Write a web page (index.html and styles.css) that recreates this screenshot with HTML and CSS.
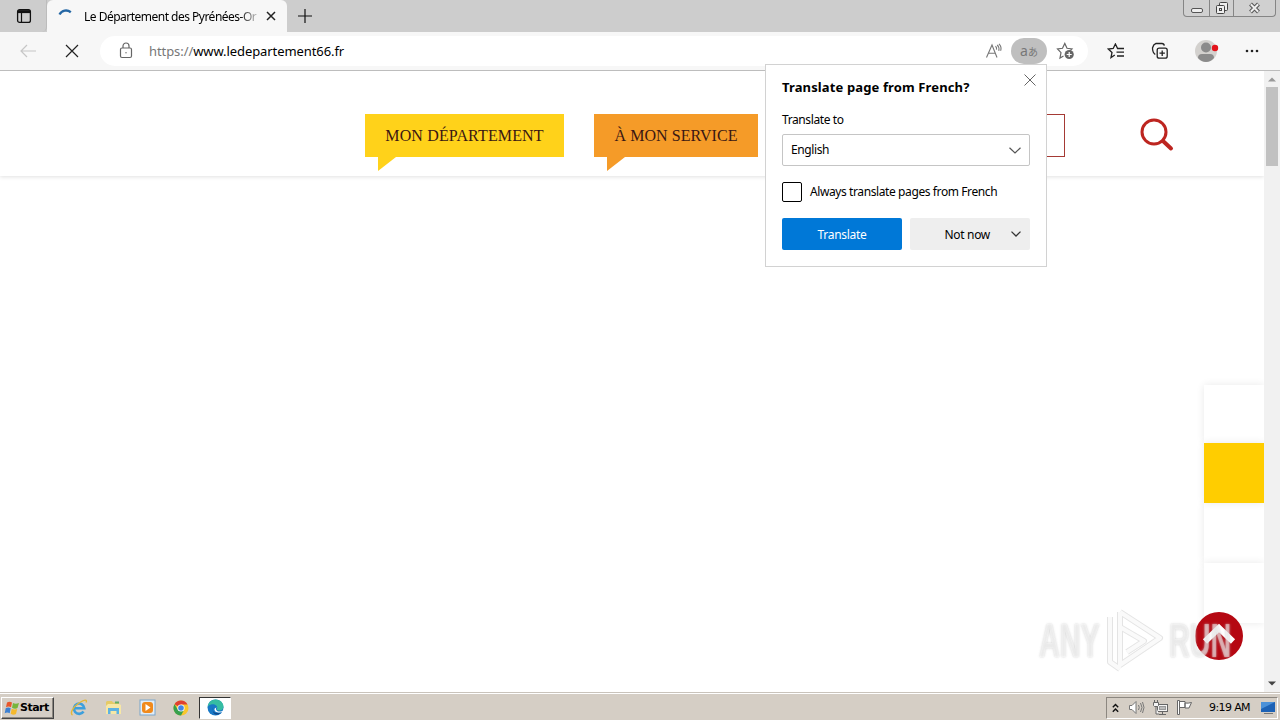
FILE: index.html
```html
<!DOCTYPE html>
<html lang="en">
<head>
  <meta charset="UTF-8" />
  <meta name="viewport" content="width=device-width, initial-scale=1.0" />
  <title>Le Département des Pyrénées-Orientales</title>
  <link rel="stylesheet" href="styles.css">
</head>
<body>
  <!-- Tab strip -->
  <div class="titlebar">
    <div class="tab-actions">
      <svg width="16" height="16" viewBox="0 0 16 16" fill="none" stroke="#111"><rect x="1.6" y="1.6" width="12.8" height="12.8" rx="2" stroke-width="1.3"/><path d="M2 3.6h12" stroke-width="3"/><path d="M5.5 4v10" stroke-width="1.2"/></svg>
    </div>
    <div class="tab">
      <svg class="spinner" width="16" height="16" viewBox="0 0 16 16" fill="none" stroke="#2467a5" stroke-width="2.4"><path d="M1.500 5.500C4 1.200 9 .3 12.800 3.200"/></svg>
      <span class="tab-title">Le Département des Pyrénées-Or</span>
      <svg class="tab-close" width="10" height="10" viewBox="0 0 10 10" stroke="#222" stroke-width="1.5"><path d="M1 1l8 8M9 1l-8 8"/></svg>
    </div>
    <svg class="new-tab" width="16" height="16" viewBox="0 0 16 16" stroke="#111" stroke-width="1.2"><path d="M8 1v14M1 8h14"/></svg>
    <div class="window-buttons">
      <span class="win-min"><svg width="14" height="7" viewBox="0 0 14 7"><rect x="1.5" y="1.5" width="11" height="4" rx="1.5" fill="#eee" stroke="#555"/></svg></span>
      <span class="win-max"><svg width="14" height="14" viewBox="0 0 14 14" fill="#eee" stroke="#444"><rect x="4.5" y="1.5" width="8" height="8" rx="1"/><rect x="1.5" y="4.5" width="8" height="8" rx="1"/><rect x="4.5" y="7.5" width="2" height="2"/></svg></span>
      <span class="win-close"><svg width="13" height="12" viewBox="0 0 13 12"><path d="M2.5 2l8 8M10.5 2l-8 8" stroke="#555" stroke-width="4"/><path d="M2.8 2.3l7.4 7.4M10.2 2.3l-7.4 7.4" stroke="#eee" stroke-width="2"/></svg></span>
    </div>
  </div>

  <!-- Address bar -->
  <div class="toolbar">
    <svg class="back" width="18" height="14" viewBox="0 0 18 14" fill="none" stroke="#c6c6c6" stroke-width="1.2"><path d="M8 1L2 7l6 6M2 7h15"/></svg>
    <svg class="stop" width="14" height="14" viewBox="0 0 14 14" stroke="#222" stroke-width="1.2"><path d="M1 1l12 12M13 1L1 13"/></svg>
    <div class="address">
      <svg class="lock" width="14" height="17" viewBox="0 0 14 17" fill="none" stroke="#666" stroke-width="1.2"><rect x="1.5" y="6" width="11" height="9.5" rx="1.5"/><path d="M4 6V4a3 3 0 0 1 6 0v2"/><circle cx="7" cy="10.7" r=".7" fill="#666" stroke="none"/></svg>
      <span class="url"><span class="scheme">https://</span>www.ledepartement66.fr</span>
      <svg class="read" width="18" height="16" viewBox="0 0 18 16" fill="none" stroke="#777" stroke-width="1.1"><path d="M1.5 14.5L7 2l5 12.5M3.5 10.2h7M10.5 3.2q1.5 1.5 1 3.5M12.2 1.8q2.4 2.3 1.6 6M14 .8q3 3.2 1.6 7"/></svg>
      <span class="translate-icon"><b>a</b>あ</span>
      <svg class="fav" width="19" height="18" viewBox="0 0 19 18" fill="none" stroke="#666" stroke-width="1.2"><path d="M7.5 14L4 16l1-5.300L1.500 7l5-.7L8.800 1.500 11 6.300l5 .6-1.700 1.800"/><circle cx="13.200" cy="12.500" r="4.600" fill="#666" stroke="none"/><path d="M13.200 10v5M10.700 12.500h5" stroke="#fff"/></svg>
    </div>
    <svg class="favorites" width="18" height="16" viewBox="0 0 18 16" fill="none" stroke="#222" stroke-width="1.3"><path d="M7.800 12L4 14.500l1-5L1.300 6.100l4.900-.6L8.400 1l2.200 4.500H17M9.500 9.200H17M10 13h7"/></svg>
    <svg class="collections" width="18" height="18" viewBox="0 0 18 18" fill="none" stroke="#222" stroke-width="1.3"><rect x="6.200" y="6.200" width="10" height="10" rx="2"/><path d="M11.200 8.500v5.400M8.500 11.200h5.400M4.300 12.500C2 11 1.500 8 1.500 6l1.300-3L5 1.500h6q2 0 2.300 2.200"/></svg>
    <svg class="profile" width="24" height="24" viewBox="0 0 24 24"><circle cx="11" cy="12" r="11" fill="#d3d1ce"/><circle cx="11" cy="8.500" r="5" fill="#8b8b8b"/><path d="M3 19q0-4 4-4h8q4 0 4 4-3.500 4-8 4t-8-4z" fill="#8b8b8b"/><circle cx="20" cy="9" r="3.200" fill="#e3131b"/></svg>
    <svg class="more" width="14" height="4" viewBox="0 0 14 4" fill="#222"><circle cx="2" cy="2" r="1.300"/><circle cx="7" cy="2" r="1.300"/><circle cx="12" cy="2" r="1.300"/></svg>
  </div>

  <!-- Page -->
  <div class="viewport">
    <main class="page">
      <header class="site-header">
        <nav class="site-nav">
          <a class="bubble yellow" href="#">MON DÉPARTEMENT</a>
          <a class="bubble orange" href="#">À MON SERVICE</a>
          <a class="outlined" href="#"></a>
        </nav>
        <svg class="search" width="36" height="36" viewBox="0 0 36 36" fill="none" stroke="#bd2520"><circle cx="15" cy="15" r="12" stroke-width="3"/><path d="M24 24l8 7.500" stroke-width="4" stroke-linecap="round"/></svg>
      </header>
      <div class="side-links">
        <span></span><span class="current"></span><span></span><span></span>
      </div>
      <svg class="to-top" width="48" height="48" viewBox="0 0 48 48"><circle cx="24" cy="24" r="24" fill="#b50812"/><path d="M10 29.500L24 16l14 13.500" fill="none" stroke="#fff" stroke-width="6"/></svg>
      <div class="watermark">
        <span>ANY</span>
        <svg width="60" height="64" viewBox="0 0 60 64" fill="none" stroke-linejoin="round"><g stroke="#dedede" stroke-width="6"><path d="M5 8v45l10 7M15 3v43M15 3l40 26-40 27V18l24 14-17 11"/></g><g stroke="#fafafa" stroke-width="4"><path d="M5 8v45l10 7M15 3v43M15 3l40 26-40 27V18l24 14-17 11"/></g></svg>
        <span>RUN</span>
      </div>
    </main>
    <div class="scrollbar">
      <svg width="8" height="5" viewBox="0 0 8 5"><path d="M0 4.500L4 .5l4 4z" fill="#999"/></svg>
      <div class="thumb"></div>
      <svg class="down" width="8" height="5" viewBox="0 0 8 5"><path d="M0 .5h8l-4 4z" fill="#444"/></svg>
    </div>
  </div>

  <!-- Translate popup -->
  <div class="popup">
    <svg class="popup-close" width="12" height="12" viewBox="0 0 12 12" stroke="#666"><path d="M.5.5l11 11M11.5.5l-11 11"/></svg>
    <h2>Translate page from French?</h2>
    <p class="label">Translate to</p>
    <div class="select"><span>English</span><svg width="12" height="7" viewBox="0 0 12 7" fill="none" stroke="#555" stroke-width="1.2"><path d="M.5.7L6 6 11.500.7"/></svg></div>
    <div class="check"><i></i><span>Always translate pages from French</span></div>
    <div class="buttons">
      <button class="primary">Translate</button>
      <button class="secondary"><span>Not now</span><svg width="10" height="6" viewBox="0 0 10 6" fill="none" stroke="#333" stroke-width="1.3"><path d="M.5.6L5 5 9.500.6"/></svg></button>
    </div>
  </div>

  <!-- Taskbar -->
  <footer class="taskbar">
    <div class="start">
      <svg width="16" height="16" viewBox="0 0 16 16"><path d="M3 2.500q2.500-1.500 5 0L7 7.300q-2.500-1.500-5 0z" fill="#e8572b"/><path d="M9 3q2.500 1.400 6 0l-1.500 5q-2.500 1.400-5.500-.3z" fill="#77b53b"/><path d="M1.700 8.300q2.500-1.500 5 0l-1 5q-2.500-1.500-5 0z" fill="#3c80d2"/><path d="M7.700 8.800q2.500 1.400 5.500.3l-1.200 5q-2.500 1.400-5.300-.3z" fill="#f5b92c"/></svg>
      <span>Start</span>
    </div>
    <div class="apps">
      <span><svg width="18" height="18" viewBox="0 0 18 18" fill="none"><path d="M13.500 12.500A5.200 5.200 0 1 1 14.300 9.300H5" stroke="#3d9fdc" stroke-width="2.600"/><path d="M2.500 16C-.5 14.500 3 8 9 4s8.500-3.500 7-.5" stroke="#e4b736" stroke-width="1.400"/></svg></span>
      <span><svg width="17" height="17" viewBox="0 0 17 17"><path d="M1 3l1-1h5l1 1.500h6V14H1z" fill="#e5ca66"/><path d="M3 5h11l2 1v9H1V7z" fill="#f7e7a5"/><path d="M3 9h11v6h-2.500v-3h-6v3H3z" fill="#5eb2e2"/><path d="M10 2.500h4v2h-4z" fill="#62ae66"/></svg></span>
      <span><svg width="17" height="17" viewBox="0 0 17 17"><rect x="1" y="1" width="15" height="15" fill="#e1edf7" stroke="#7aa5cc"/><rect x="3" y="3" width="11" height="11" rx="3" fill="#f08a1d"/><path d="M6.500 5l5 3.500-5 3.500z" fill="#fff"/></svg></span>
      <span><svg width="16" height="16" viewBox="0 0 16 16"><circle cx="8" cy="8" r="7.500" fill="#f9c62c"/><path d="M8 8L1.500 4.200A7.500 7.500 0 0 1 14.500 4.500H8z" fill="#df4033"/><path d="M1.500 4.200A7.500 7.500 0 0 0 8 15.500L11 10 5 10z" fill="#36a04e"/><circle cx="8" cy="8" r="3.600" fill="#fff"/><circle cx="8" cy="8" r="2.800" fill="#4285e5"/></svg></span>
      <span class="active"><svg width="17" height="17" viewBox="0 0 17 17"><circle cx="8.500" cy="8.500" r="8" fill="#1878c6"/><path d="M.6 8C1 3.500 4.500.5 8.500.5c5 0 8 3.800 8 7 0 2.500-2 4-4 4-2.500 0-3.300-1-2.300-2C10.800 7 8 5 5 5.300 2.500 5.600 1 7 .6 8z" fill="#36bda2"/><path d="M5.500 8.500c-1 4 3 6.800 8.500 5-5 5-9 .5-8.500-5z" fill="#114a8b"/><path d="M9.500 8.200c-1.400 2 .2 4.600 3.500 4.300 1.500-.1 3-.9 3.500-1.600l-.5 1.900c-3 1.500-9 1.200-8.500-3z" fill="#fff"/></svg></span>
    </div>
    <div class="tray">
      <svg width="7" height="10" viewBox="0 0 7 10" fill="none" stroke="#111" stroke-width="1.4"><path d="M.8 4.200l2.700-2.700 2.700 2.700M.8 8.700L3.500 6l2.700 2.700"/></svg>
      <svg class="sound" width="17" height="15" viewBox="0 0 17 15" fill="none" stroke="#777"><path d="M1.500 5.500H4l4-4v12l-4-4H1.500z" fill="#fff"/><path d="M10.500 5q1.500 2.500 0 5M12.500 3q3 4.500 0 9M14.500 2q3 5.500 0 11"/></svg>
      <svg class="network" width="17" height="16" viewBox="0 0 17 16" fill="#f4f4f4" stroke="#666"><rect x="5.500" y="4.500" width="10" height="7"/><rect x="7.500" y="6.500" width="6" height="3" fill="#bbb" stroke="#999"/><path d="M7 14.500h7M10.500 12v2M1.500 2.500h5v3l-1 1h-3l-1-1zM2.500 0v2M5.500 0v2M4 7v7h3"/></svg>
      <svg class="flag" width="17" height="15" viewBox="0 0 17 15" fill="#fff" stroke="#666"><path d="M1.500.5h2v14h-2zM3.500 1.500h5.500v6H3.500zM9 3q3 .5 6.500-.5l-2.500 5.500H9z"/></svg>
      <span class="clock">9:19 AM</span>
      <svg class="desktop" width="16" height="14" viewBox="0 0 16 14"><path d="M1 1h14v10H1z" fill="#1d62b5"/><path d="M1 1h14L1 8z" fill="#4b91d8"/><path d="M4 12h9v1H4z" fill="#777"/></svg>
    </div>
  </footer>
</body>
</html>
```

FILE: styles.css
```css
*, *::before, *::after {
  box-sizing: border-box;
  margin: 0;
  padding: 0;
}
body {
  width: 1280px;
  height: 720px;
  overflow: hidden;
  display: flex;
  flex-direction: column;
  position: relative;
  background: #fff;
  color: #000;
  font-family: "Noto Sans", "Open Sans", "Noto Sans CJK JP", sans-serif;
  font-size: 12px;
}
svg { display: block; flex: none; }
a { text-decoration: none; color: inherit; }

/* Tab strip */
.titlebar {
  height: 32px;
  flex: none;
  display: flex;
  background: #cdcdcd;
}
.tab-actions {
  width: 47px;
  padding: 8px 0 0 16px;
  border-radius: 0 0 5px 0;
  border-right: 1px solid #bcbcbc;
}
.tab {
  width: 240px;
  display: flex;
  align-items: center;
  padding-left: 11px;
  background: #f7f7f7;
  border-radius: 6px 6px 0 0;
}
.spinner { margin-top: 2px; }
.tab-title {
  width: 173px;
  margin-left: 10px;
  white-space: nowrap;
  letter-spacing: -0.51px;
  -webkit-mask-image: linear-gradient(90deg, #000 155px, transparent 178px);
  mask-image: linear-gradient(90deg, #000 155px, transparent 178px);
}
.tab-close { margin-left: 9px; }
.new-tab { margin: 8px 0 0 10px; }
.window-buttons {
  display: flex;
  margin-left: auto;
  margin-right: 4px;
  width: 93px;
  height: 17px;
  border: 1px solid #858585;
  border-top: 0;
  border-radius: 0 0 4px 4px;
  background: #d0d0d0;
}
.window-buttons span {
  display: flex;
  justify-content: center;
  align-items: center;
}
.win-min { width: 25px; padding-top: 4px; }
.win-max { width: 25px; border: solid #858585; border-width: 0 1px; }
.win-close { flex: 1; }

/* Address bar */
.toolbar {
  height: 39px;
  flex: none;
  display: flex;
  align-items: center;
  padding: 0 21px 1px 19px;
  background: #f7f7f7;
  border-bottom: 1px solid #bdbdbd;
}
.stop { margin-left: 28px; }
.address {
  width: 988px;
  height: 30px;
  margin-left: 21px;
  padding: 0 13px 0 19px;
  display: flex;
  align-items: center;
  background: #fff;
  border-radius: 15px;
}
.url {
  margin-left: 16px;
  margin-right: auto;
  font-size: 13px;
  letter-spacing: -0.08px;
}
.scheme { color: #777; }
.translate-icon {
  width: 36px;
  height: 26px;
  margin: 0 9px 0 8px;
  border-radius: 13px;
  background: #bfbfbf;
  color: #777;
  font-size: 10px;
  line-height: 25px;
  text-align: center;
}
.translate-icon b { font-size: 14px; font-weight: 400; }
.favorites { margin-left: 19px; }
.collections { margin-left: 26px; }
.profile { margin-left: 26px; }
.more { margin-left: auto; }

/* Page */
.viewport {
  height: 621px;
  flex: none;
  display: flex;
}
.page {
  position: relative;
  width: 1264px;
  overflow: hidden;
}
.site-header {
  height: 105px;
  display: flex;
  align-items: flex-start;
  padding: 43px 0 0 365px;
  box-shadow: 0 1px 4px rgba(0,0,0,0.12);
}
.site-nav {
  width: 700px;
  display: flex;
}
.bubble {
  position: relative;
  height: 43px;
  font-family: "Liberation Serif", serif;
  font-size: 16px;
  line-height: 43px;
  text-align: center;
  white-space: nowrap;
  color: #3a1713;
}
.bubble::after {
  content: "";
  position: absolute;
  top: 100%;
  left: 13px;
  width: 18px;
  height: 14px;
  background: inherit;
  clip-path: polygon(0 0, 100% 0, 0 100%);
}
.yellow { width: 199px; background: #ffd21a; letter-spacing: 0.15px; }
.orange { width: 164px; margin-left: 30px; background: #f59b28; letter-spacing: 0.05px; }
.outlined {
  width: 277px;
  height: 43px;
  margin-left: auto;
  border: 1px solid #a53a35;
}
.search { margin: 3px 0 0 74px; }

/* Floating links on the right edge */
.side-links {
  position: absolute;
  top: 314px;
  right: 0;
  width: 60px;
}
.side-links span {
  display: block;
  height: 60px;
  background: #fff;
  box-shadow: 0 0 8px rgba(0,0,0,0.09);
}
.side-links span:first-child { height: 58px; }
.side-links .current { position: relative; background: #ffcd00; }
.to-top {
  position: absolute;
  left: 1195px;
  top: 541px;
}
.watermark {
  position: absolute;
  left: 1039px;
  top: 538px;
  display: flex;
  align-items: center;
  opacity: 0.8;
  font-family: "Liberation Sans", sans-serif;
  font-size: 48px;
  font-weight: 700;
  line-height: 64px;
  color: rgba(255,255,255,0.55);
  text-shadow: 0 0 3px #c4c4c4;
}
.watermark span {
  width: 66px;
  white-space: nowrap;
  transform: scaleX(0.6);
  transform-origin: left;
}
.watermark svg { margin-right: 4px; }

/* Scrollbar */
.scrollbar {
  width: 16px;
  display: flex;
  flex-direction: column;
  align-items: center;
  padding: 6px 0;
  background: #f1f1f1;
}
.thumb {
  width: 12px;
  height: 79px;
  margin-top: 5px;
  background: #c1c1c1;
}
.down { margin-top: auto; }

/* Translate popup */
.popup {
  position: absolute;
  left: 765px;
  top: 64px;
  width: 282px;
  height: 203px;
  padding: 13px 16px 0;
  background: #fff;
  border: 1px solid #d2d2d2;
  letter-spacing: -0.4px;
}
.popup-close {
  position: absolute;
  top: 9px;
  right: 10px;
}
.popup h2 {
  font-size: 13px;
  line-height: 19px;
  white-space: nowrap;
  letter-spacing: 0.13px;
}
.label { margin-top: 14px; line-height: 18px; }
.select {
  height: 32px;
  margin-top: 5px;
  padding: 0 8px;
  display: flex;
  align-items: center;
  justify-content: space-between;
  border: 1px solid #c5c5c5;
  border-radius: 2px;
}
.select span, .check span { padding-bottom: 1px; }
.check {
  display: flex;
  align-items: center;
  gap: 8px;
  margin-top: 16px;
  white-space: nowrap;
}
.check i {
  width: 20px;
  height: 20px;
  border: 1px solid #000;
  border-radius: 2px;
}
.buttons {
  display: flex;
  gap: 8px;
  margin-top: 16px;
}
.buttons button {
  width: 120px;
  height: 32px;
  border: 0;
  border-radius: 2px;
  font: inherit;
  letter-spacing: -0.3px;
}
.primary { background: #0078d7; color: #fff; }
.buttons .secondary {
  display: flex;
  align-items: center;
  justify-content: flex-end;
  gap: 21px;
  padding-right: 9px;
  background: #eee;
}

/* Taskbar */
.taskbar {
  height: 28px;
  display: flex;
  align-items: center;
  padding: 2px 2px 0 1px;
  background: #d5cec5;
  border-top: 1px solid #c9c3bb;
  box-shadow: inset 0 1px #fff;
  font-family: "DejaVu Sans", sans-serif;
}
.start {
  width: 53px;
  height: 22px;
  display: flex;
  align-items: center;
  padding-left: 2px;
  border: 1px solid;
  border-color: #fff #444 #444 #fff;
  box-shadow: inset -1px -1px #8c8780;
  font-size: 11px;
  font-weight: 700;
  letter-spacing: -0.5px;
}
.apps {
  display: flex;
  margin-left: 8px;
}
.apps span {
  width: 34px;
  height: 22px;
  display: flex;
  align-items: center;
  justify-content: center;
}
.apps .active {
  width: 32px;
  margin-left: 1px;
  background: #fff;
  border: 1px solid;
  border-color: #333 #fff #fff #333;
}
.tray {
  width: 172px;
  height: 22px;
  margin-left: auto;
  padding: 0 1px 0 5px;
  display: flex;
  align-items: center;
  border: 1px solid;
  border-color: #8c8780 #fff #fff #8c8780;
}
.sound { margin-left: 9px; }
.network { margin-left: 7px; }
.flag { margin-left: 7px; }
.clock {
  margin-left: auto;
  font-size: 11px;
  letter-spacing: -0.6px;
}
.desktop { margin-left: 10px; }
```
